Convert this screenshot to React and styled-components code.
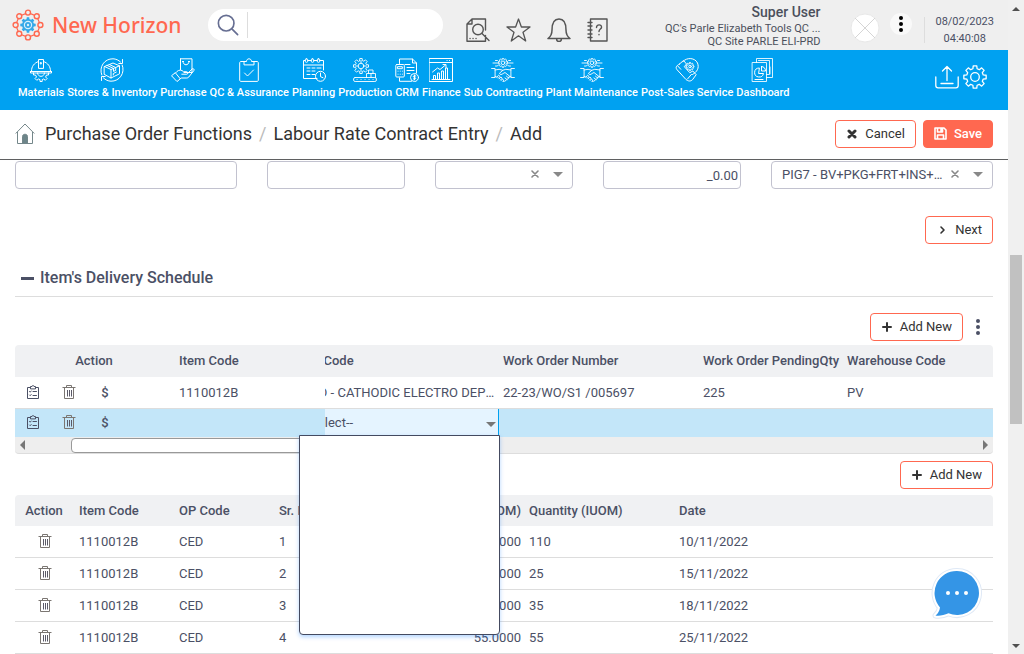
import React from "react";
import styled, { createGlobalStyle, css } from "styled-components";

const GlobalStyle = createGlobalStyle`
  * { box-sizing: border-box; }
  body { margin: 0; background: #fff; color: #4b5065; font: 13px/16px Roboto, "Liberation Sans", sans-serif; }
  button, input, select { font: inherit; color: inherit; margin: 0; }
  a { color: inherit; text-decoration: none; }
`;

/* ---------- page frame ---------- */
const Shell = styled.div`
  display: flex;
  height: 100vh;
  overflow: hidden;
`;
const Page = styled.div`
  flex: 1;
  min-width: 0;
  display: flex;
  flex-direction: column;
`;
const ScrollTrack = styled.div`
  width: 16px;
  padding: 7px 2px 6px;
  background: #f0f0f0;
  display: flex;
  flex-direction: column;
  align-items: center;
`;
const ScrollSpace = styled.div`
  flex: ${(p) => p.$grow} 1 0;
`;
const ScrollThumb = styled.div`
  flex: 169 1 0;
  width: 12px;
  background: #c1c1c1;
`;
const Triangle = styled.span`
  flex: none;
  width: 0;
  height: 0;
  border: ${(p) => p.$size || 4}px solid transparent;
  ${(p) => p.$dir === "up" && css`border-bottom-color: #505050; border-top: 0;`}
  ${(p) => p.$dir === "down" && css`border-top-color: ${p.$color || "#505050"}; border-bottom: 0;`}
  ${(p) => p.$dir === "left" && css`border-right-color: #777; border-left: 0;`}
  ${(p) => p.$dir === "right" && css`border-left-color: #777; border-right: 0;`}
`;

/* ---------- top bar ---------- */
const TopBar = styled.header`
  flex: none;
  height: 50px;
  padding: 0 14px 0 12px;
  background: #efefef;
  display: flex;
  align-items: center;
`;
const Brand = styled.a`
  display: flex;
  align-items: center;
  gap: 8px;
  color: #ff6850;
  font: 500 21px/30px "Noto Sans", "Open Sans", sans-serif;
  white-space: nowrap;
`;
const SearchBox = styled.label`
  width: 235px;
  height: 32px;
  margin-left: 27px;
  padding: 3px 12px 3px 9px;
  border-radius: 16px;
  background: #fff;
  display: flex;
  align-items: center;
  color: #666e92;
`;
const SearchInput = styled.input`
  flex: 1;
  min-width: 0;
  height: 26px;
  margin-left: 8px;
  border: 0;
  border-left: 1px solid #ddd;
  outline: 0;
  background: none;
`;
const QuickLinks = styled.div`
  display: flex;
  gap: 16px;
  margin: 10px 0 0 23px;
  color: #555;
`;
const IconButton = styled.button`
  padding: 0;
  border: 0;
  background: none;
  display: flex;
  align-items: center;
  justify-content: center;
  color: ${(p) => p.$color || "inherit"};
`;
const UserInfo = styled.div`
  margin: 2px 0 0 auto;
  text-align: right;
  font-size: 11px;
  line-height: 13px;
  color: #4b4f5c;
  white-space: nowrap;
`;
const UserName = styled.div`
  font-size: 14px;
  line-height: 16px;
  font-weight: 500;
  margin-bottom: 2px;
`;
const Avatar = styled.span`
  display: flex;
  margin: 5px 10px 0 30px;
`;
const MoreButton = styled(IconButton)`
  width: 22px;
  height: 22px;
  margin-bottom: 2px;
  border-radius: 50%;
  background: #f9f9f9;
  color: #000;
`;
const Clock = styled.div`
  height: 26px;
  margin: 10px 0 0 12px;
  padding-left: 10px;
  border-left: 1px solid #ddd;
  display: flex;
  flex-direction: column;
  justify-content: center;
  text-align: center;
  font-size: 11px;
  line-height: 17px;
`;

/* ---------- module navigation ---------- */
const Nav = styled.nav`
  flex: none;
  height: 60px;
  padding: 8px 21px 0 18px;
  background: #00a1f1;
  color: #fff;
  display: flex;
  gap: 3px;
`;
const NavItem = styled.a`
  display: flex;
  flex-direction: column;
  align-items: center;
  gap: 4px;
  font-size: 11px;
  line-height: 14px;
  font-weight: 500;
  white-space: nowrap;
`;
const NavTools = styled.div`
  display: flex;
  gap: 4px;
  margin: 7px 0 0 auto;
  align-self: flex-start;
`;

/* ---------- title bar ---------- */
const TitleBar = styled.div`
  flex: none;
  height: 50px;
  padding: 0 15px 2px;
  border-bottom: 1px solid #5f6061;
  display: flex;
  align-items: center;
`;
const Crumbs = styled.nav`
  display: flex;
  align-items: center;
  gap: 7px;
  margin-right: auto;
  font-size: 18px;
  line-height: 24px;
  color: #333;
  white-space: nowrap;
`;
const Home = styled.a`
  display: flex;
  margin-right: 3px;
`;
const Slash = styled.span`
  color: #bbb;
`;
const Button = styled.button`
  height: 28px;
  padding: 0 10px;
  border: 1px solid #ff6850;
  border-radius: 4px;
  background: ${(p) => (p.$filled ? "#ff6850" : "#fff")};
  color: ${(p) => (p.$filled ? "#fff" : "#333")};
  font-weight: ${(p) => (p.$filled ? 500 : 400)};
  display: flex;
  align-items: center;
  gap: 7px;
  margin-left: 7px;
  white-space: nowrap;
`;

/* ---------- form ---------- */
const Content = styled.main`
  flex: 1;
  min-height: 0;
  overflow: hidden;
  padding: 1px 15px 0;
`;
const Fields = styled.div`
  display: grid;
  grid-template-columns: 222fr 138fr 138fr 138fr 222fr;
  gap: 30px;
`;
const TextField = styled.input`
  width: 100%;
  min-width: 0;
  height: 28px;
  padding: 0 2px 0 10px;
  border: 1px solid #c2c2cf;
  border-radius: 4px;
  background: #fff;
  text-align: ${(p) => (p.$number ? "right" : "left")};
`;
const Combo = styled.div`
  position: relative;
  min-width: 0;
`;
const ComboSelect = styled.select`
  appearance: none;
  width: 100%;
  height: 28px;
  padding: 0 48px 0 10px;
  border: 1px solid #c2c2cf;
  border-radius: 4px;
  background: #fff;
  overflow: hidden;
  text-overflow: ellipsis;
  white-space: nowrap;
`;
const ComboTools = styled.span`
  position: absolute;
  top: 0;
  right: 10px;
  height: 26px;
  display: flex;
  align-items: center;
  gap: 14px;
`;
const Actions = styled.div`
  display: flex;
  justify-content: flex-end;
  align-items: center;
  margin-top: ${(p) => p.$top}px;
`;
const SectionTitle = styled.h2`
  display: flex;
  align-items: center;
  gap: 6px;
  height: 33px;
  margin: 20px 0 0;
  padding: 0 6px 4px;
  border-bottom: 1px solid #ddd;
  font-size: 16px;
  line-height: 20px;
  font-weight: 500;
`;
const Dash = styled.span`
  width: 13px;
  height: 3px;
  background: currentColor;
`;

/* ---------- grids ---------- */
const GridBox = styled.div`
  position: relative;
  margin-top: ${(p) => p.$top}px;
`;
const Table = styled.table`
  width: 100%;
  table-layout: fixed;
  border-collapse: separate;
  border-spacing: 0;
`;
const Th = styled.th`
  height: ${(p) => p.$height || 32}px;
  padding: 0 4px;
  background: #f0f1f3;
  font-weight: 500;
  text-align: ${(p) => p.$align || "left"};
  white-space: nowrap;
  overflow: hidden;
  &:first-child { border-top-left-radius: 4px; padding: 0 6px 0 4px; }
  &:last-child { border-top-right-radius: 4px; }
`;
const Td = styled.td`
  height: 32px;
  padding: 0 4px;
  border-bottom: 1px solid #ddd;
  text-align: ${(p) => p.$align || "left"};
  white-space: nowrap;
  overflow: hidden;
`;
const SelectedRow = styled.tr`
  ${Td} {
    height: 28px;
    border-bottom: 0;
    background: #c3e6f9;
  }
`;
const EditTd = styled(Td)`
  padding: 0;
  && { background: #e5f4ff; }
`;
/* column content partly scrolled beneath the frozen columns */
const Scrolled = styled.div`
  position: relative;
  margin: 0 0 0 -26px;
  overflow: hidden;
  text-overflow: ellipsis;
`;
const CellSelect = styled.select`
  appearance: none;
  display: block;
  width: 100%;
  height: 28px;
  padding: 0 20px 0 4px;
  border: 0;
  border-right: 1px solid #00a1f1;
  background: transparent;
`;
const CellCaret = styled.span`
  position: absolute;
  top: 13px;
  right: 3px;
`;
const RowIcons = styled.div`
  display: flex;
  align-items: center;
  gap: 16px;
  padding-left: 4px;
`;
const RowButton = styled(IconButton)`
  width: 20px;
  height: 20px;
  margin: ${(p) => (p.$center ? "0 auto" : 0)};
  font-weight: 500;
`;
const GridMenuButton = styled(IconButton)`
  width: 30px;
  height: 28px;
`;
const HScroll = styled.div`
  display: flex;
  align-items: center;
  height: 17px;
  padding: 0 5px;
  background: #eee;
  border-bottom: 1px solid #ddd;
  border-radius: 0 0 4px 4px;
`;
const HThumb = styled.div`
  width: 42%;
  height: 15px;
  margin: 0 auto 0 46px;
  border: 1px solid #999;
  border-radius: 4px;
  background: #fff;
`;
const Popup = styled.div`
  position: absolute;
  z-index: 2;
  top: 90px;
  left: 284px;
  width: 201px;
  height: 200px;
  border: 1px solid #444a60;
  border-radius: 0 0 4px 4px;
  background: #fff;
  box-shadow: 0 2px 4px rgba(0, 115, 255, 0.3);
`;
const ChatButton = styled(IconButton)`
  position: fixed;
  z-index: 3;
  right: 41px;
  bottom: 35px;
`;

/* ---------- drawings ---------- */
const Svg = ({ size = 24, w, h, sw = 1, box = "0 0 24 24", children }) => (
  <svg width={w || size} height={h || size} viewBox={box} fill="none" stroke="currentColor"
    strokeWidth={sw} strokeLinecap="round" strokeLinejoin="round" aria-hidden="true">
    {children}
  </svg>
);

const gearPath = (cx, cy, outer, inner, teeth) => {
  const pts = [];
  for (let i = 0; i < teeth; i++) {
    [[-0.32, inner], [-0.2, outer], [0.2, outer], [0.32, inner]].forEach(([o, r]) => {
      const a = ((i + o) / teeth) * Math.PI * 2;
      pts.push(`${(cx + r * Math.sin(a)).toFixed(2)} ${(cy - r * Math.cos(a)).toFixed(2)}`);
    });
  }
  return `M${pts.join("L")}Z`;
};

const Logo = () => {
  const nodes = Array.from({ length: 8 }, (_, i) => {
    const a = (i * Math.PI) / 4;
    return [16 + 12.4 * Math.sin(a), 16 - 12.4 * Math.cos(a)];
  });
  return (
    <svg width="32" height="32" viewBox="0 0 32 32" fill="none" aria-hidden="true">
      <polygon points={nodes.map((n) => n.join(",")).join(" ")} stroke="#ff6850" strokeWidth="1.2" />
      {nodes.map(([x, y], i) => (
        <circle key={i} cx={x} cy={y} r="2.5" fill="#efefef" stroke="#ff6850" strokeWidth="1.4" />
      ))}
      <path d={gearPath(16, 16, 7.8, 6, 8)} fill="#35a8e8" />
      <circle cx="16" cy="16" r="3.6" stroke="#d8f0fc" strokeWidth="1.2" />
      <circle cx="16" cy="16" r="1.2" fill="#d8f0fc" />
    </svg>
  );
};

const Handshake = () => (
  <Svg sw={0.9}>
    <path d={gearPath(12, 4.8, 4.6, 3.5, 8)} /><circle cx="12" cy="4.8" r="1.8" />
    <path d="M2 5h5M17 5h5M4.500 2.500h2l1 1M4.500 8h2l1-1.200M19.500 2.500h-2l-1 1M19.500 8h-2l-1-1.200" />
    <path d="M.6 10.500h3.500v9H.6M23.400 10.500h-3.500v9h3.500M4.100 12l4-.7 3.700 1 3-1 5.100.7M4.100 18.500l2 .7M19.900 18.500l-2 .7M11.800 12.300l-3.400 3c.6 1.600 2.400 1.500 3.700.2l1.900-1 5 4M6 19l1.600-1.800 1.300 1.100-1.500 1.800M8.200 20.800l1.700-1.800 1.300 1.200-1.600 1.700M10.200 22.500l1.400-1.400 1.200 1.100-1 1.200c2.500.4 4.800-2 6.300-4.400M14 20l2 1.500M15.500 18.200l2 1.800" />
  </Svg>
);

const icons = {
  materials: (
    <Svg>
      <path d="M2.500 13c0-4.500 2.500-8 7-9.500M21.500 13c0-4.500-2.500-8-7-9.500M1.500 13.500h21M1.500 13.500v1.500h21v-1.500M9.500 10V1.500h5V10zM11.700 4.500h.6v1.500h-.6z" />
      <path d="M4.500 15v2h2l1 2-1.500 1.500 1.800 1.800L9.500 21l1.500.6v1.900h2.200v-1.900l1.500-.6 1.600 1.300 1.800-1.800L16.600 19l.9-2h2v-2M8.500 15c.2 4.600 6.800 4.600 7 0" />
    </Svg>
  ),
  stores: (
    <Svg>
      <path d="M1.800 17C-1.400 9 4.500.6 13 .8c3 .1 5.500 1.300 7.500 3.200M22.200 7c3.200 8-2.700 16.400-11.200 16.200-3-.1-5.500-1.300-7.500-3.200M22.500 1.500v4h-3.700M1.500 22.500v-4h3.700" />
      <path d="M4.500 8.500 13 5l6.500 2.800v8L11 20l-6.500-3.500zM4.500 8.500l6.500 3 8.500-3.700M11 11.500V20M7 7.400l6.500 3v3l2.200-1V9.500L9.300 6.500M13.300 17v-1.500l3-1.400" />
    </Svg>
  ),
  purchase: (
    <Svg>
      <path d="M9.500.8H21v13.700h-8M9.500.8v10.800M12 3.500c0 4.500 6 4.500 6 0M11.500 3.500h1M17.500 3.500h1" />
      <path d="M.8 17.500l3.500-2.800 5 6.200-3 2.400zM4.500 15c2-2.500 4-3.500 6.500-2.500l1.500 1.200h3.300c1.400.2 1.400 2.500 0 2.500h-5M17 15.200l4-4.200c1.300-1 2.800.4 1.800 1.700l-5 6.300c-.6.7-1.200 1-2 1h-5.500l-1 .7" />
    </Svg>
  ),
  quality: (
    <Svg>
      <path d="M7 3.500H4C3 3.500 2.700 4 2.700 5v17c0 1 .5 1.400 1.300 1.400h16c1 0 1.300-.5 1.300-1.400V5c0-1-.4-1.500-1.300-1.500h-3M7 6.500v-3h2.500c0-3.600 5-3.600 5 0H17v3zM7.500 15l3 3 6-6" />
    </Svg>
  ),
  planning: (
    <Svg>
      <path d="M15 20.500H1.500v-18H3M6 2.500h3M12 2.500h3M18 2.500h3.500V12M1.500 7h20M5 10h3M10 10h3M15 10h4M5 13h3M10 13h3M5 16.500h3M10 16.500h3" />
      <rect x="3.300" y=".8" width="2.400" height="3.500" rx="1" /><rect x="9.300" y=".8" width="2.400" height="3.500" rx="1" /><rect x="15.300" y=".8" width="2.400" height="3.500" rx="1" />
      <circle cx="18.500" cy="18.300" r="5" /><path d="M18.500 15v3.700l2.500 1" />
    </Svg>
  ),
  production: (
    <Svg sw={0.9}>
      <path d={gearPath(8, 8, 7.600, 5.600, 8)} /><circle cx="8" cy="8" r="2.800" /><path d="M8 2.500v2.700M8 10.800v2.700M2.500 8h2.700M10.800 8h2.700" />
      <rect x=".6" y="19.500" width="22.800" height="4" rx="1.500" /><path d="M4 21.500h.1M8 21.500h.1M12 21.500h.1M16 21.500h.1M20 21.500h.1" />
      <path d="M13.500 19.500v-4h9v4M18 15.500v4M15.500 15.500V12h4.500v3.500" />
    </Svg>
  ),
  crm: (
    <Svg>
      <path d="M4.500 5.500V1h13l4 4v10M17.500 1v4h4M4.500 20v3.300h12M10 6.500h5M12 9.500h7M12 12.500h7M12 15.500h3" />
      <rect x=".8" y="6.500" width="8.500" height="12.500" rx="1" /><path d="M2.800 8.700h4.500v2H2.800zM3 13.200h.1M5.200 13.200h.1M7.300 13.200h.1M3 16.200h.1M5.200 16.200h.1M7.300 16.200h.1" />
      <circle cx="19.500" cy="19.500" r="4" /><path d="M20.800 18c-3-1-3.200 1.200-1.200 1.500s1.300 2.400-1.200 1.400M19.500 16.900v5" />
    </Svg>
  ),
  finance: (
    <Svg>
      <path d="M.5.5h23v23H.5zM.5 4.500h23M18 2.500h.1M20.500 2.500h.1M3 21.500h18M4.500 21v-3.500h2V21M8.500 21v-6h2v6M12.500 21v-8h2v8M16.500 21V10h2v11M3.500 14l5-4 2.500 1.500 5.500-4.500M14 6.500h3v3" />
    </Svg>
  ),
  handshake: <Handshake />,
  post: (
    <Svg>
      <path d="M8 3.500C12-1 20-.3 22.500 5c2 5-.5 9-5 11.500M4.500 6l4-3.500 3 3.500-2.200 2.700 5.500 6 3-1.700 3.400 3.700-3.700 5c-2 2-4.500 1.500-6.500-.2L2.300 12c-2-2.200-1.500-4 2.200-6zM2.800 8l3 3.300M12.500 21l4-4.700" />
      <path d={gearPath(15, 8.500, 4, 3, 8)} /><circle cx="15" cy="8.500" r="1.300" />
    </Svg>
  ),
  dashboard: (
    <Svg>
      <path d="M1.500 4.500h14v19h-14zM5.500 4.500v-4h16v19h-6M7.500 2.500h11v14h-3M19 9v7" opacity=".85" />
      <path d="M8 10a4.500 4.500 0 1 0 4.500 5.500H8zM10.500 8.500v4.500h4c0-2.500-1.500-4.500-4-4.500M4 21.500h8" />
    </Svg>
  ),
};

const modules = [
  ["Materials", "materials"],
  ["Stores & Inventory", "stores"],
  ["Purchase", "purchase"],
  ["QC & Assurance", "quality"],
  ["Planning", "planning"],
  ["Production", "production"],
  ["CRM", "crm"],
  ["Finance", "finance"],
  ["Sub Contracting", "handshake"],
  ["Plant Maintenance", "handshake"],
  ["Post-Sales Service", "post"],
  ["Dashboard", "dashboard"],
];

const SearchIcon = () => (
  <Svg size={22} sw={1.8}><circle cx="10" cy="10" r="8.500" /><path d="m16.500 16.500 6 6" /></Svg>
);
const TrashIcon = () => (
  <svg width="14" height="16" viewBox="0 0 14 16" fill="none" stroke="#7b7672" aria-hidden="true">
    <path d="M.5 2.500h13M4.500 2.500v-2h5v2M2.500 2.500v11h9v-11" />
    <path d="M5.500 5v6.500M7.500 5v6.500M9.500 5v6.500" stroke="#5b5a68" />
  </svg>
);
const ClipIcon = () => (
  <Svg w={12} h={16} box="0 0 12 16">
    <path d="M3.500 2.500h-3v11h11v-11h-3M3.500 3.500v-2h1.500c0-1.300 2-1.300 2 0h1.500v2zM2.500 6.500l.7.700 1-1.200M6 6.500h3.500M2.500 10l.7.700 1-1.200M6 10.500h3.500" />
  </Svg>
);
const PlusIcon = () => <Svg w={12} h={10} sw={2} box="0 0 12 10"><path d="M2 5h8M6 1v8" /></Svg>;
const CrossIcon = () => <Svg w={12} h={10} sw={3} box="0 0 12 10"><path d="m3 2 6 6M9 2 3 8" /></Svg>;
const ClearIcon = () => <Svg size={8} sw={1.6} box="0 0 8 8"><path d="m1 1 6 6M7 1 1 7" /></Svg>;
const ChevronIcon = () => <Svg w={12} h={10} sw={1.6} box="0 0 12 10"><path d="m5 2 3 3-3 3" /></Svg>;
const SaveIcon = () => (
  <Svg w={13} h={13} sw={1.6} box="0 0 13 13"><path d="M1 1h9l2 2v9H1zM3.500 1.500V5h5V1.500M3.500 12V8h6v4M7 2v2" /></Svg>
);
const DotsIcon = () => (
  <svg width="6" height="18" viewBox="0 0 6 18" fill="currentColor" aria-hidden="true">
    <circle cx="3" cy="3" r="2" /><circle cx="3" cy="9" r="2" /><circle cx="3" cy="15" r="2" />
  </svg>
);

const AddNew = () => (
  <Button type="button"><PlusIcon />Add New</Button>
);

const RowTools = () => (
  <RowIcons>
    <RowButton type="button" aria-label="Details"><ClipIcon /></RowButton>
    <RowButton type="button" aria-label="Delete"><TrashIcon /></RowButton>
    <RowButton type="button" aria-label="Rates">$</RowButton>
  </RowIcons>
);

const deliveries = [
  ["1", "110.0000", "110", "10/11/2022"],
  ["2", "25.0000", "25", "15/11/2022"],
  ["3", "35.0000", "35", "18/11/2022"],
  ["4", "55.0000", "55", "25/11/2022"],
];

const ComboBox = ({ label, value }) => (
  <Combo>
    <ComboSelect aria-label={label} defaultValue={value}>
      <option>{value}</option>
    </ComboSelect>
    <ComboTools>
      <IconButton type="button" aria-label={`Clear ${label}`} $color="#888"><ClearIcon /></IconButton>
      <Triangle $dir="down" $size={5} $color="#888" />
    </ComboTools>
  </Combo>
);

const bubble = "M26 4a22 22 0 1 1-8.500 42.300C13 48.500 8 49 4.500 48.500c2.500-2 4-4.500 4.500-8A22 22 0 0 1 26 4z";

export default function App() {
  return (
    <Shell>
      <GlobalStyle />
      <Page>
        <TopBar>
          <Brand href="#"><Logo />New Horizon</Brand>
          <SearchBox>
            <SearchIcon />
            <SearchInput type="text" aria-label="Search" />
          </SearchBox>
          <QuickLinks>
            <IconButton type="button" aria-label="Find document">
              <Svg sw={1.4}>
                <path d="M19.500 17.500v5.800H1V6l5-5h13.500v11M6 1v5H1M4 20.500h.1M7 20.500h.1M10 20.500h.1M16 15.500l7 7" />
                <circle cx="12" cy="11.500" r="5.300" />
              </Svg>
            </IconButton>
            <IconButton type="button" aria-label="Favourites">
              <Svg w={25} sw={1.300}><path d="m12 1 2.900 8H23.500l-7 5.200 2.700 8.800L12 17.800 4.800 23l2.700-8.800L.5 9h8.600z" /></Svg>
            </IconButton>
            <IconButton type="button" aria-label="Notifications">
              <Svg sw={1.500}><path d="M1 20.500h22c-3.500-2.500-4-4.500-4-8.500C19 5 16.500 1 12 1S5 5 5 12c0 4-.5 6-4 8.500zM9.500 20.500c0 4 5 4 5 0" /></Svg>
            </IconButton>
            <IconButton type="button" aria-label="Help">
              <Svg sw={1.400}>
                <path d="M3.500 1H20v22H3.500zM1 4.500h4M1 8h4M1 12h4M1 16h4M1 19.500h4M9.500 9.500c0-3.800 5.500-3.300 5 0-.3 1.600-2.500 1.800-2.500 4M12 16.500v.3" />
              </Svg>
            </IconButton>
          </QuickLinks>
          <UserInfo>
            <UserName>Super User</UserName>
            <div>QC's Parle Elizabeth Tools QC ...</div>
            <div>QC Site PARLE ELI-PRD</div>
          </UserInfo>
          <Avatar>
            <svg width="30" height="30" viewBox="0 0 30 30" fill="none" stroke="#d5d5d5" aria-hidden="true">
              <circle cx="15" cy="15" r="14" fill="#fff" stroke="#e8e8e8" />
              <path d="m5 5 20 20M25 5 5 25" />
            </svg>
          </Avatar>
          <MoreButton type="button" aria-label="More"><DotsIcon /></MoreButton>
          <Clock>
            <span>08/02/2023</span>
            <span>04:40:08</span>
          </Clock>
        </TopBar>

        <Nav>
          {modules.map(([label, icon]) => (
            <NavItem key={label} href="#">{icons[icon]}{label}</NavItem>
          ))}
          <NavTools>
            <IconButton type="button" aria-label="Upload">
              <Svg sw={1.300}><path d="M.8 12v8.500c0 1.500.7 2.300 2.300 2.300h17.800c1.600 0 2.300-.8 2.300-2.300V12M6 18.500h12M12 15.500V1.500M7.500 6 12 1.500 16.500 6" /></Svg>
            </IconButton>
            <IconButton type="button" aria-label="Settings">
              <Svg sw={1.300}><path d={gearPath(12, 12, 11.300, 8.500, 8)} /><circle cx="12" cy="12" r="4.300" /></Svg>
            </IconButton>
          </NavTools>
        </Nav>

        <TitleBar>
          <Crumbs aria-label="Breadcrumb">
            <Home href="#" aria-label="Home">
              <svg width="20" height="21" viewBox="0 0 20 21" fill="none" stroke="#74878a" aria-hidden="true">
                <path d="M.7 10.500 10 1l9.300 9.500M2.500 9v11.500h15V9" />
                <path d="M7.500 20.500v-7c0-3 5-3 5 0v7z" fill="#6d8589" />
              </svg>
            </Home>
            <a href="#">Purchase Order Functions</a>
            <Slash>/</Slash>
            <a href="#">Labour Rate Contract Entry</a>
            <Slash>/</Slash>
            <span>Add</span>
          </Crumbs>
          <Button type="button"><CrossIcon />Cancel</Button>
          <Button type="button" $filled><SaveIcon />Save</Button>
        </TitleBar>

        <Content>
          <Fields>
            <TextField type="text" aria-label="Description" />
            <TextField type="text" aria-label="Reference" />
            <ComboBox label="Unit" value="" />
            <TextField type="text" aria-label="Rate" defaultValue="_0.00" $number />
            <ComboBox label="Price group" value="PIG7 - BV+PKG+FRT+INS+TAX+OTH" />
          </Fields>
          <Actions $top={27}>
            <Button type="button"><ChevronIcon />Next</Button>
          </Actions>

          <SectionTitle><Dash />Item's Delivery Schedule</SectionTitle>
          <Actions $top={16}>
            <AddNew />
            <GridMenuButton type="button" aria-label="Grid options"><DotsIcon /></GridMenuButton>
          </Actions>

          <GridBox $top={4}>
            <Table>
              <colgroup>
                <col width="160" /><col width="150" /><col width="174" />
                <col width="200" /><col width="144" /><col />
              </colgroup>
              <thead>
                <tr>
                  <Th $align="center">Action</Th>
                  <Th>Item Code</Th>
                  <Th><Scrolled>OP Code</Scrolled></Th>
                  <Th>Work Order Number</Th>
                  <Th>Work Order PendingQty</Th>
                  <Th>Warehouse Code</Th>
                </tr>
              </thead>
              <tbody>
                <tr>
                  <Td><RowTools /></Td>
                  <Td>1110012B</Td>
                  <Td><Scrolled>CED - CATHODIC ELECTRO DEPOSITION</Scrolled></Td>
                  <Td>22-23/WO/S1 /005697</Td>
                  <Td>225</Td>
                  <Td>PV</Td>
                </tr>
                <SelectedRow>
                  <Td><RowTools /></Td>
                  <Td />
                  <EditTd>
                    <Scrolled>
                      <CellSelect aria-label="OP Code" defaultValue="--Select--">
                        <option>--Select--</option>
                      </CellSelect>
                      <CellCaret><Triangle as="div" $dir="down" $size={5} $color="#777" /></CellCaret>
                    </Scrolled>
                  </EditTd>
                  <Td />
                  <Td />
                  <Td />
                </SelectedRow>
              </tbody>
            </Table>
            <HScroll>
              <Triangle $dir="left" $size={5} />
              <HThumb />
              <Triangle $dir="right" $size={5} />
            </HScroll>
            <Popup role="listbox" aria-label="OP Code options" />
          </GridBox>

          <Actions $top={7}><AddNew /></Actions>

          <GridBox $top={6}>
            <Table>
              <colgroup>
                <col width="60" /><col width="100" /><col width="100" /><col width="100" />
                <col width="150" /><col width="150" /><col />
              </colgroup>
              <thead>
                <tr>
                  <Th $height={31} $align="center">Action</Th>
                  <Th $height={31}>Item Code</Th>
                  <Th $height={31}>OP Code</Th>
                  <Th $height={31}>Sr. No.</Th>
                  <Th $height={31} $align="right">Quantity (OUOM)</Th>
                  <Th $height={31}>Quantity (IUOM)</Th>
                  <Th $height={31}>Date</Th>
                </tr>
              </thead>
              <tbody>
                {deliveries.map(([sr, ordered, qty, date]) => (
                  <tr key={sr}>
                    <Td><RowButton type="button" aria-label="Delete" $center><TrashIcon /></RowButton></Td>
                    <Td>1110012B</Td>
                    <Td>CED</Td>
                    <Td>{sr}</Td>
                    <Td $align="right">{ordered}</Td>
                    <Td>{qty}</Td>
                    <Td>{date}</Td>
                  </tr>
                ))}
              </tbody>
            </Table>
          </GridBox>
        </Content>
      </Page>

      <ScrollTrack aria-hidden="true">
        <Triangle $dir="up" />
        <ScrollSpace $grow={244} />
        <ScrollThumb />
        <ScrollSpace $grow={220} />
        <Triangle $dir="down" />
      </ScrollTrack>

      <ChatButton type="button" aria-label="Chat">
        <svg width="52" height="52" viewBox="0 0 52 52" strokeLinejoin="round" aria-hidden="true">
          <path d={bubble} fill="#fff" stroke="#dfe9f6" strokeWidth="6" />
          <path d={bubble} fill="#3495e6" stroke="#fff" strokeWidth="4" />
          <path d={bubble} fill="#3495e6" />
          <circle cx="17" cy="26" r="2" fill="#fff" /><circle cx="26" cy="26" r="2" fill="#fff" /><circle cx="35" cy="26" r="2" fill="#fff" />
        </svg>
      </ChatButton>
    </Shell>
  );
}
